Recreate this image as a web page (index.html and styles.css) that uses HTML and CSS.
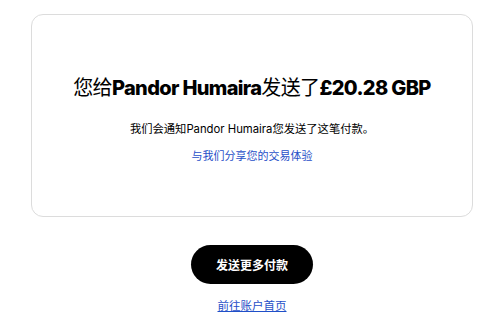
FILE: index.html
```html
<!DOCTYPE html>
<html lang="zh">
<head>
<meta charset="utf-8">
<link rel="stylesheet" href="styles.css">
</head>
<body>
<main class="page">
  <section class="card">
    <h1 class="title">您给<b>Pandor Humaira</b>发送了<b>£20.28 GBP</b></h1>
    <p class="note">我们会通知Pandor Humaira您发送了这笔付款。</p>
    <a class="share" href="#">与我们分享您的交易体验</a>
  </section>
  <div class="actions">
    <button class="primary">发送更多付款</button>
    <a class="home" href="#">前往账户首页</a>
  </div>
</main>
</body>
</html>
```
FILE: styles.css
```css
html, body { margin: 0; padding: 0; background: #fff; }
body {
  font-family: "Inter", "Noto Sans CJK SC", sans-serif;
  color: #000;
  width: 500px;
  height: 323px;
  overflow: hidden;
}
.page { padding-top: 14px; }
.card {
  margin-left: 31px;
  width: 442px;
  height: 203px;
  border: 1px solid #dcdcdc;
  border-radius: 12px;
  display: flex;
  flex-direction: column;
  align-items: center;
  box-sizing: border-box;
  padding-top: 57px;
}
.title {
  margin: 0;
  font-size: 20px;
  line-height: 32px;
  font-weight: 400;
  letter-spacing: -0.65px;
  white-space: nowrap;
}
.title b { font-weight: 800; }
.note {
  margin: 17px 0 0;
  font-size: 11.3px;
  line-height: 16px;
}
.share {
  margin-top: 11px;
  font-size: 11px;
  line-height: 16px;
  color: #1f4fc8;
  text-decoration: none;
}
.actions {
  display: flex;
  flex-direction: column;
  align-items: center;
  margin-top: 28px;
  padding-left: 4px;
}
.primary {
  width: 122px;
  height: 39px;
  border: none;
  border-radius: 20px;
  background: #000;
  color: #fff;
  font-family: "Noto Sans CJK SC", sans-serif;
  font-weight: 700;
  font-size: 12px;
}
.home {
  margin-top: 14px;
  font-size: 11.5px;
  line-height: 16px;
  color: #1f4fc8;
  text-decoration: underline;
}
```
